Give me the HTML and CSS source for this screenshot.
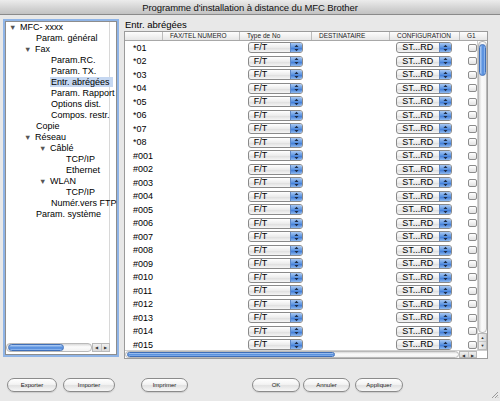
FILE: index.html
```html
<!DOCTYPE html>
<html lang="fr">
<head>
  <meta charset="UTF-8" />
  <title>Programme d'installation à distance du MFC Brother</title>
  <link rel="stylesheet" href="styles.css">
</head>
<body>
  <div class="window">
    <div class="titlebar">Programme d'installation à distance du MFC Brother</div>

    <div class="content">
      <div class="tree">
        <ul class="tree-list">
          <li class="lv0"><span class="tri">&#9660;</span>MFC- xxxx</li>
          <li class="lv1">Param. général</li>
          <li class="lv1"><span class="tri">&#9660;</span>Fax</li>
          <li class="lv2">Param.RC.</li>
          <li class="lv2">Param. TX.</li>
          <li class="lv2"><span class="sel">Entr. abrégées</span></li>
          <li class="lv2">Param. Rapport</li>
          <li class="lv2">Options dist.</li>
          <li class="lv2">Compos. restr.</li>
          <li class="lv1">Copie</li>
          <li class="lv1"><span class="tri">&#9660;</span>Réseau</li>
          <li class="lv2"><span class="tri">&#9660;</span>Câblé</li>
          <li class="lv3">TCP/IP</li>
          <li class="lv3">Ethernet</li>
          <li class="lv2"><span class="tri">&#9660;</span>WLAN</li>
          <li class="lv3">TCP/IP</li>
          <li class="lv2">Numér.vers FTP</li>
          <li class="lv1">Param. système</li>
        </ul>
        <div class="hscroll tree-scroll">
          <div class="track"><div class="thumb-h"></div></div>
          <div class="arrows-h"><span>&#9664;</span><span>&#9654;</span></div>
        </div>
      </div>

      <div class="detail">
        <div class="detail-title">Entr. abrégées</div>
        <div class="grid">
          <div class="grid-head">
            <div class="hc c0"></div>
            <div class="hc c1">FAX/TEL NUMERO</div>
            <div class="hc c2">Type de No</div>
            <div class="hc c3">DESTINATAIRE</div>
            <div class="hc c4">CONFIGURATION</div>
            <div class="hc c5">G1</div>
          </div>
          <div class="grid-body">
            <div class="rows" id="rows"></div>
            <div class="vscroll">
              <div class="track-v"><div class="thumb-v"></div></div>
              <div class="arrows-v"><span>&#9650;</span><span>&#9660;</span></div>
            </div>
          </div>
          <div class="hscroll">
            <div class="track"><div class="thumb-h wide"></div></div>
            <div class="arrows-h"><span>&#9664;</span><span>&#9654;</span></div>
            <div class="corner"></div>
          </div>
        </div>
      </div>
    </div>

    <div class="buttons">
      <button class="btn b-export">Exporter</button>
      <button class="btn b-import">Importer</button>
      <button class="btn b-print">Imprimer</button>
      <button class="btn b-ok">OK</button>
      <button class="btn b-cancel">Annuler</button>
      <button class="btn b-apply">Appliquer</button>
    </div>

    <svg class="grip" width="8" height="8" viewBox="0 0 8 8">
      <path d="M7 1 L1 7 M7 4 L4 7 M7 6.5 L6.5 7" stroke="#9a9a9a" stroke-width="1" fill="none"/>
    </svg>
  </div>

  <script>
    const ids = ['*01', '*02', '*03', '*04', '*05', '*06', '*07', '*08'];
    for (let i = 1; i <= 15; i++) {
      ids.push('#' + String(i).padStart(3, '0'));
    }

    const stepper = `<span class="pop-arrows"><svg width="5" height="8" viewBox="0 0 5 8">
      <path d="M0.5 3 L2.5 0.8 L4.5 3 Z M0.5 5 L2.5 7.2 L4.5 5 Z" fill="#1d2b45"/></svg></span>`;

    const rows = document.getElementById('rows');
    ids.forEach(id => {
      rows.innerHTML += `<div class="row">
        <div class="cell c0">${id}</div>
        <div class="cell c1"></div>
        <div class="cell c2"><span class="popup"><span class="pop-text">F/T</span>${stepper}</span></div>
        <div class="cell c3"></div>
        <div class="cell c4"><span class="popup"><span class="pop-text">ST...RD</span>${stepper}</span></div>
        <div class="cell c5"><span class="check"></span></div>
      </div>`;
    });
  </script>
</body>
</html>
```

FILE: styles.css
```css
* {
  box-sizing: border-box;
}
body {
  margin: 0;
  font-family: "Liberation Sans", Arial, sans-serif;
  font-size: 9px;
  color: #000;
  background: #e8e8e8;
}
.window {
  position: relative;
  width: 500px;
  height: 401px;
  background: #e8e8e8;
  overflow: hidden;
}
.titlebar {
  height: 15px;
  line-height: 15px;
  text-align: center;
  font-size: 9.5px;
  letter-spacing: -0.1px;
  color: #111;
  background: linear-gradient(#ececec, #d2d2d2 60%, #c2c2c2);
  border-bottom: 1px solid #8a8a8a;
}
.content {
  display: flex;
  padding-top: 4px;
  height: 353px;
}

/* tree */
.tree {
  position: relative;
  margin: 2px 0 0 5px;
  width: 112px;
  height: 334px;
  background: #fff;
  border: 1px solid #8d8d8d;
  box-shadow: 0 0 0 2px #8fb4e6;
  display: flex;
  flex-direction: column;
}
.tree-list {
  list-style: none;
  margin: 0;
  padding: 0;
  flex: 1;
  border-right: 1px solid #d8d8d8;
  margin-right: 6px;
}
.tree-list li {
  height: 11px;
  line-height: 11px;
  white-space: nowrap;
}
.lv0 { padding-left: 15px; }
.lv1 { padding-left: 30px; }
.lv2 { padding-left: 45px; }
.lv3 { padding-left: 60px; }
.tri {
  display: inline-block;
  width: 11px;
  margin-left: -12px;
  font-size: 7.5px;
  color: #555;
  vertical-align: top;
}
.sel {
  background: #c5d7f1;
  padding: 0 3px 0 1px;
  margin-left: -1px;
}

/* scrollbars */
.hscroll {
  display: flex;
  height: 8px;
  background: #fff;
  border-top: 1px solid #cfcfcf;
}
.tree-scroll {
  margin: 0 6px 2px 0;
  border-top: none;
  height: 9px;
}
.track {
  flex: 1;
  padding: 0 1px;
  background: linear-gradient(#d8d8d8, #fbfbfb 40%, #f2f2f2);
  border: 1px solid #b9b9b9;
  border-radius: 4px;
}
.thumb-h {
  width: 56px;
  height: 100%;
  border-radius: 4px;
  border: 1px solid #3f6fb8;
  background: linear-gradient(#b6d0f4, #5b93e0 50%, #3f7bd6 55%, #9cc2f2);
}
.thumb-h.wide {
  width: 208px;
}
.arrows-h {
  display: flex;
  width: 18px;
  font-size: 4px;
  color: #333;
  background: linear-gradient(#f0f0f0, #dadada);
  border: 1px solid #b9b9b9;
}
.arrows-h span {
  flex: 1;
  text-align: center;
  line-height: 7px;
}
.arrows-h span + span {
  border-left: 1px solid #c4c4c4;
}
.corner {
  width: 10px;
  background: #fff;
}

/* detail panel */
.detail {
  margin-left: 7px;
  width: 364px;
}
.detail-title {
  height: 12px;
  line-height: 12px;
  padding-left: 1px;
  font-size: 9.5px;
}
.grid {
  height: 328px;
  border: 1px solid #9b9b9b;
  background: #fff;
  display: flex;
  flex-direction: column;
}
.grid-head {
  display: flex;
  height: 9px;
  background: linear-gradient(#fdfdfd, #e6e6e6);
  border-bottom: 1px solid #a8a8a8;
}
.hc {
  font-size: 6.5px;
  line-height: 8px;
  padding-left: 7px;
  color: #222;
  border-right: 1px solid #bcbcbc;
  white-space: nowrap;
  overflow: hidden;
}
.c0 { width: 38px; }
.c1 { width: 77px; }
.c2 { width: 72px; }
.c3 { width: 78px; }
.c4 { width: 70px; }
.c5 { flex: 1; }
.grid-head .c5 { border-right: none; }

.grid-body {
  flex: 1;
  display: flex;
  overflow: hidden;
}
.rows {
  flex: 1;
  overflow: hidden;
}
.row {
  display: flex;
  height: 13.5px;
  align-items: center;
}
.cell {
  white-space: nowrap;
}
.row .c0 { padding-left: 8px; }
.row .c2 { padding-left: 8px; }
.row .c4 { padding-left: 7px; }
.row .c5 { padding-left: 9px; }

.popup {
  display: flex;
  width: 55px;
  height: 11px;
  border: 1px solid #8a8a8a;
  border-radius: 3px;
  background: linear-gradient(#ffffff, #ececec 50%, #dedede 55%, #f6f6f6);
  overflow: hidden;
}
.c4 .popup {
  width: 56px;
}
.pop-text {
  flex: 1;
  padding-left: 5px;
  line-height: 9px;
}
.pop-arrows {
  width: 12px;
  display: flex;
  align-items: center;
  justify-content: center;
  border-left: 1px solid #5f87c4;
  background: linear-gradient(#a9c9f3, #5b93e0 50%, #3c78d4 55%, #8fbaf0);
}
.check {
  display: block;
  width: 9px;
  height: 8px;
  border: 1px solid #8c8c8c;
  border-radius: 2px;
  background: linear-gradient(#fff, #e2e2e2);
}

.vscroll {
  width: 10px;
  display: flex;
  flex-direction: column;
  background: #fff;
  border-left: 1px solid #cfcfcf;
}
.track-v {
  flex: 1;
  padding: 2px 0;
  background: linear-gradient(90deg, #d8d8d8, #fbfbfb 40%, #f2f2f2);
  border: 1px solid #b9b9b9;
  border-radius: 4px;
}
.thumb-v {
  height: 32px;
  border-radius: 4px;
  border: 1px solid #3f6fb8;
  background: linear-gradient(90deg, #b6d0f4, #5b93e0 50%, #3f7bd6 55%, #9cc2f2);
}
.arrows-v {
  height: 17px;
  display: flex;
  flex-direction: column;
  font-size: 4px;
  color: #333;
  background: linear-gradient(90deg, #f0f0f0, #dadada);
  border: 1px solid #b9b9b9;
}
.arrows-v span {
  flex: 1;
  text-align: center;
  line-height: 7px;
}
.arrows-v span + span {
  border-top: 1px solid #c4c4c4;
}

/* bottom buttons */
.buttons {
  display: flex;
  padding: 10px 0 0 7px;
}
.btn {
  height: 14px;
  padding: 0;
  font-family: "Liberation Sans", Arial, sans-serif;
  font-size: 6px;
  color: #222;
  border: 1px solid #8b8b8b;
  border-radius: 7px;
  background: linear-gradient(#ffffff, #f3f3f3 45%, #e2e2e2 55%, #f7f7f7);
  box-shadow: 0 1px 1px rgba(0,0,0,0.12);
}
.b-export { width: 50px; }
.b-import { width: 52px; margin-left: 6px; }
.b-print { width: 47px; margin-left: 26px; }
.b-ok { width: 48px; margin-left: 64px; }
.b-cancel { width: 47px; margin-left: 3px; }
.b-apply { width: 48px; margin-left: 5px; }

.grip {
  position: absolute;
  right: 1px;
  bottom: 2px;
}
```
